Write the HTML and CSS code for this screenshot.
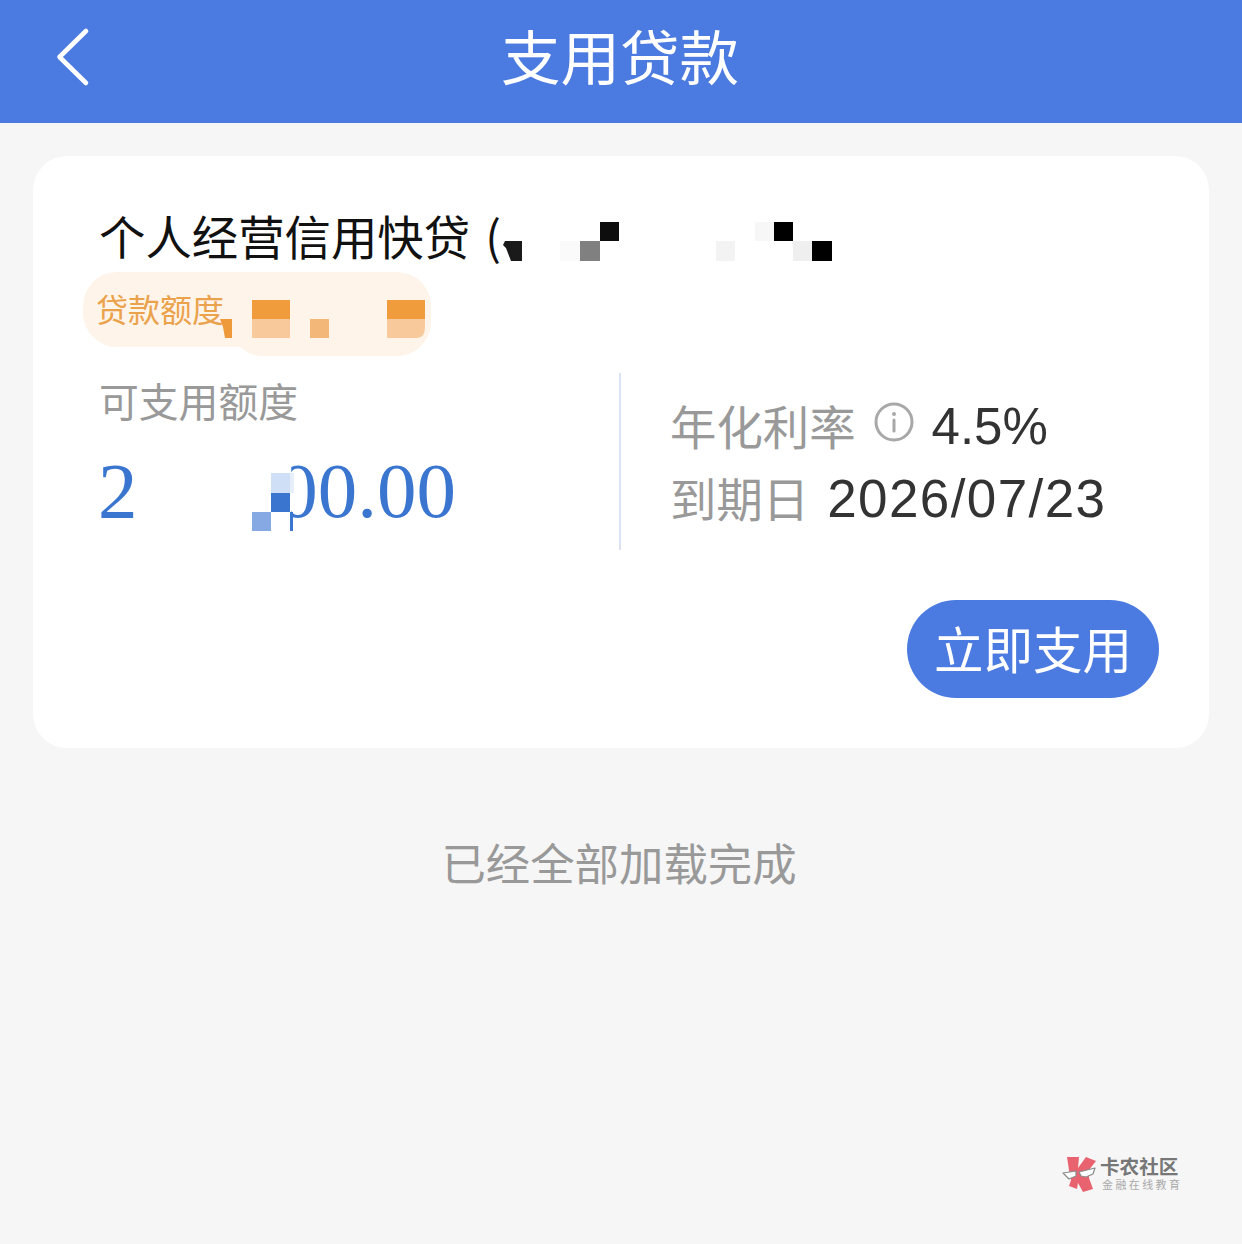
FILE: index.html
```html
<!DOCTYPE html>
<html lang="zh-CN">
<head>
<meta charset="utf-8">
<title>支用贷款</title>
<link rel="stylesheet" href="styles.css">
</head>
<body>
<header class="topbar">
  <a class="back" aria-label="返回">
    <svg width="36" height="62" viewBox="0 0 36 62"><path d="M30 5 3.5 31 30 57" fill="none" stroke="#fff" stroke-width="4.6" stroke-linecap="round" stroke-linejoin="round"/></svg>
  </a>
  <h1 class="topbar-title">支用贷款</h1>
</header>
<main class="content">
  <section class="card">
    <h2 class="loan-name">个人经营信用快贷<span class="paren">(</span>
      <svg class="mosaic mosaic-name" width="340" height="42" viewBox="0 0 340 42">
        <path d="M7 22h17v20H13l-5-13-3-3z" fill="#1a1a1a"/>
        <rect x="62" y="22" width="20" height="20" fill="#fafafa"/>
        <rect x="82" y="22" width="20" height="20" fill="#808080"/>
        <rect x="102" y="3" width="19" height="19" fill="#0d0d0d"/>
        <rect x="218" y="22" width="19" height="20" fill="#f3f3f3"/>
        <rect x="257" y="3" width="19" height="19" fill="#f7f7f7"/>
        <rect x="276" y="3" width="19" height="19" fill="#000"/>
        <rect x="295" y="22" width="19" height="20" fill="#efefef"/>
        <rect x="314" y="22" width="20" height="20" fill="#000"/>
      </svg>
    </h2>
    <div class="quota-tag">
      <span class="quota-bump"></span>
      <span class="quota-text">贷款额度</span>
      <svg class="mosaic mosaic-quota" width="210" height="40" viewBox="0 0 210 40">
        <path d="M3 19h12v19H8l-2-11z" fill="#ee9a3b"/>
        <rect x="35" y="0" width="38" height="19" fill="#f09c3c"/>
        <rect x="35" y="19" width="38" height="19" fill="#f8ca9b"/>
        <rect x="93" y="19" width="19" height="19" fill="#f3b877"/>
        <rect x="170" y="0" width="38" height="19" fill="#f09c3c"/>
        <path d="M170 19h38v8q0 11-8 11h-30z" fill="#f8ca9b"/>
      </svg>
    </div>
    <div class="stats">
      <div class="stat-left">
        <div class="stat-label">可支用额度</div>
        <div class="amount">
          <span>2</span><span class="amount-tail">00.00</span>
          <svg class="mosaic mosaic-amount" width="46" height="60" viewBox="0 0 46 60">
            <rect x="19" y="0" width="19" height="20" fill="#cfdff5"/>
            <rect x="38" y="0" width="4" height="20" fill="#e6eefa"/>
            <rect x="19" y="20" width="19" height="19" fill="#3a75cf"/>
            <rect x="0" y="39" width="19" height="19" fill="#86a9e3"/>
            <rect x="19" y="39" width="19" height="19" fill="#fff"/>
            <rect x="38" y="39" width="3" height="19" fill="#3a75cf"/>
          </svg>
        </div>
      </div>
      <div class="stat-right">
        <div class="stat-row">
          <span class="stat-key">年化利率</span>
          <svg class="info" width="40" height="40" viewBox="0 0 40 40"><circle cx="20" cy="20" r="18" fill="none" stroke="#a8a8a8" stroke-width="3"/><circle cx="20" cy="12" r="2" fill="#a8a8a8"/><path d="M20 18v11" stroke="#a8a8a8" stroke-width="3" stroke-linecap="round"/></svg>
          <span class="stat-value">4.5%</span>
        </div>
        <div class="stat-row">
          <span class="stat-key">到期日</span>
          <span class="stat-value stat-date">2026/07/23</span>
        </div>
      </div>
    </div>
    <div class="actions">
      <button class="primary">立即支用</button>
    </div>
  </section>
  <p class="end-note">已经全部加载完成</p>
</main>
<aside class="watermark">
  <svg class="wm-logo" width="36" height="38" viewBox="0 0 36 38">
    <path d="M5 1 17 1 16 12 24 1 34 5 27 14 27 22 31 33 21 36 16 27 15 33 7 30 9 24 7 14z" fill="#e8636f"/>
    <path d="M1 17 14 15 14 20 7 23zM17 16 33 12 31 18 24 21 19 20z" fill="#fff" stroke="#8a8a8a" stroke-width="1.2" stroke-linejoin="round"/>
  </svg>
  <div class="wm-text">
    <div class="wm-main">卡农社区</div>
    <div class="wm-sub">金融在线教育</div>
  </div>
</aside>
</body>
</html>
```
FILE: styles.css
```css
* { box-sizing: border-box; }
html, body { margin: 0; padding: 0; }
body {
  position: relative;
  width: 1242px;
  height: 1244px;
  overflow: hidden;
  background: #f6f6f6;
  font-family: "Noto Sans CJK SC", "Liberation Sans", sans-serif;
}
.topbar {
  position: relative;
  display: flex;
  align-items: center;
  justify-content: center;
  height: 123px;
  padding: 0 2px 14px 0;
  background: #4b7ae0;
}
.back {
  position: absolute;
  left: 56px;
  top: 26px;
  display: block;
  line-height: 0;
}
.topbar-title {
  margin: 0;
  font-size: 59.5px;
  font-weight: 400;
  line-height: 1;
  color: #fff;
}
.content { padding: 33px 33px 0; }
.card {
  padding: 53px 50px 50px 67px;
  height: 592px;
  background: #fff;
  border-radius: 34px;
}
.loan-name {
  position: relative;
  margin: -3px 0 0 -1px;
  height: 58px;
  font-size: 46.4px;
  font-weight: 400;
  line-height: 58px;
  color: #111;
  white-space: nowrap;
}
.paren { margin-left: 15px; }
.mosaic { position: absolute; display: block; }
.mosaic-name { left: 399px; top: 13px; }
.quota-tag {
  position: relative;
  display: flex;
  align-items: center;
  width: 348px;
  height: 75px;
  margin: 8px 0 0 -17px;
  padding: 0 0 4px 13px;
  background: #fef4e9;
  border-radius: 34px;
}
.quota-bump {
  position: absolute;
  left: 146px;
  top: 8px;
  width: 202px;
  height: 76px;
  background: #fef4e9;
  border-radius: 34px;
}
.quota-text {
  position: relative;
  font-size: 32px;
  line-height: 40px;
  color: #eba24c;
}
.mosaic-quota { left: 134px; top: 28px; }
.stats {
  display: flex;
  height: 177px;
  margin-top: 26px;
}
.stat-left {
  position: relative;
  width: 521px;
  padding-top: 2px;
  border-right: 2px solid #dde2f2;
}
.stat-label {
  margin-left: -1px;
  font-size: 39.8px;
  line-height: 50px;
  color: #999;
}
.amount {
  position: relative;
  display: flex;
  justify-content: space-between;
  width: 358px;
  margin: 21px 0 0 -2px;
  font-family: "Liberation Serif", serif;
  font-size: 79px;
  line-height: 90px;
  color: #3a75cf;
}
.amount-tail { clip-path: inset(0 0 0 13px); }
.mosaic-amount { left: 154px; top: 27px; }
.stat-right {
  padding: 15px 0 0 49px;
}
.stat-row {
  display: flex;
  align-items: center;
  height: 72px;
}
.stat-key {
  font-size: 46.4px;
  color: #999;
}
.info { margin-left: 18px; margin-top: -4px; }
.stat-value {
  margin: 4px 0 0 18px;
  font-family: "Liberation Sans", sans-serif;
  font-size: 51px;
  color: #333;
}
.stat-date {
  margin-left: 18px;
  font-size: 53px;
  letter-spacing: 1.4px;
}
.actions {
  display: flex;
  justify-content: flex-end;
  margin-top: 50px;
}
.primary {
  width: 252px;
  height: 98px;
  padding: 0 0 4px;
  border: 0;
  border-radius: 49px;
  background: #4b7ae0;
  font-family: inherit;
  font-size: 49.5px;
  color: #fff;
}
.end-note {
  margin: 84px 4px 0 0;
  font-size: 44.4px;
  line-height: 60px;
  text-align: center;
  color: #999;
}
.watermark {
  position: absolute;
  left: 1062px;
  top: 1156px;
  display: flex;
  gap: 2px;
}
.wm-text { font-family: "Liberation Sans", "Noto Sans CJK SC", sans-serif; }
.wm-main {
  font-size: 19.6px;
  font-weight: 700;
  line-height: 23px;
  color: #777;
  white-space: nowrap;
}
.wm-sub {
  margin-left: 2px;
  font-size: 11px;
  line-height: 12px;
  letter-spacing: 2.4px;
  color: #aaa;
  white-space: nowrap;
}
```
